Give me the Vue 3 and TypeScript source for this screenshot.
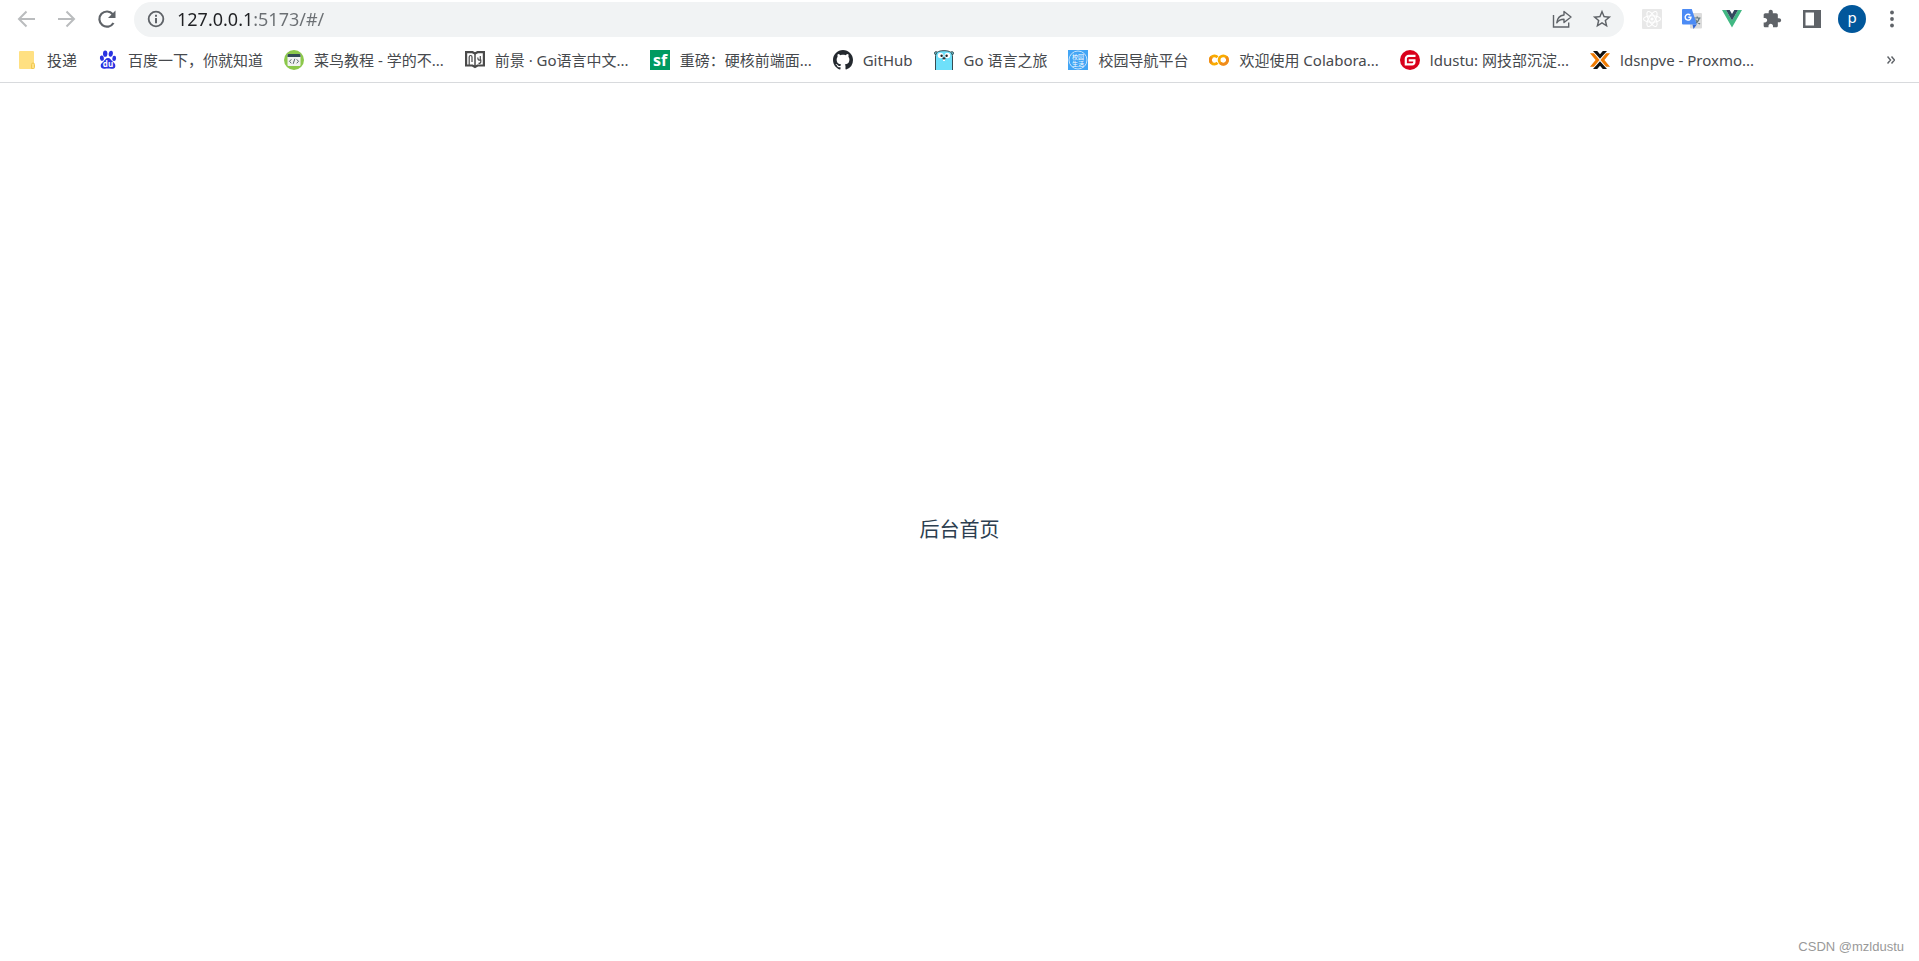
<script setup lang="ts">
import { ref } from 'vue'

interface Bookmark {
  icon: string
  label: string
}

const address = ref('127.0.0.1:5173/#/')

const bookmarks: Bookmark[] = [
  { icon: 'folder', label: '投递' },
  { icon: 'baidu', label: '百度一下，你就知道' },
  { icon: 'runoob', label: '菜鸟教程 - 学的不...' },
  { icon: 'book', label: '前景 · Go语言中文...' },
  { icon: 'sf', label: '重磅：硬核前端面...' },
  { icon: 'github', label: 'GitHub' },
  { icon: 'gopher', label: 'Go 语言之旅' },
  { icon: 'campus', label: '校园导航平台' },
  { icon: 'colab', label: '欢迎使用 Colabora...' },
  { icon: 'gitee', label: 'ldustu: 网技部沉淀...' },
  { icon: 'proxmox', label: 'ldsnpve - Proxmo...' },
]
</script>

<template>
  <div class="browser">
    <header class="chrome">
      <div class="toolbar">
        <nav class="group" aria-label="History">
          <button class="tool faded" aria-label="Back" disabled>
            <svg width="24" height="24" viewBox="0 0 24 24"><path fill="none" stroke="currentColor" stroke-width="2" d="M20 12H4.500M11.500 4.500 4 12l7.500 7.500" /></svg>
          </button>
          <button class="tool faded" aria-label="Forward" disabled>
            <svg width="24" height="24" viewBox="0 0 24 24"><path fill="none" stroke="currentColor" stroke-width="2" d="M3 12h16M11.500 4.500 19 12l-7.500 7.500" /></svg>
          </button>
          <button class="tool" aria-label="Reload">
            <svg width="24" height="24" viewBox="0 0 24 24"><path fill="none" stroke="currentColor" stroke-width="2.200" d="M18.500 16A7.600 7.600 0 1 1 17.800 7.200" /><path fill="currentColor" d="M20.500 3.500v7.500H13z" /></svg>
          </button>
        </nav>

        <form class="omnibox" @submit.prevent>
          <svg class="info" width="20" height="20" viewBox="0 0 24 24" aria-hidden="true"><circle cx="12" cy="12" r="8.800" fill="none" stroke="currentColor" stroke-width="2.200" /><path fill="currentColor" d="M10.800 6.800h2.400v2.400h-2.400zM10.800 10.800h2.400v6.400h-2.400z" /></svg>
          <input v-model="address" class="address" type="text" aria-label="Address" spellcheck="false" />
          <button class="tool" type="button" aria-label="Share">
            <svg width="22" height="22" viewBox="0 0 22 22" fill="none" stroke="currentColor" stroke-width="1.400"><path d="M2.500 7v12h15.200v-4.500" /><path stroke-linejoin="round" d="M13 3.500l7 5.500-7 5.500v-3.200c-3.300 0-5.500 1-7.200 3.500.4-4 2.800-7.300 7.200-7.800z" /></svg>
          </button>
          <button class="tool" type="button" aria-label="Bookmark this page">
            <svg width="22" height="22" viewBox="0 0 24 24"><path fill="currentColor" d="M22 9.240l-7.190-.62L12 2 9.190 8.630 2 9.240l5.460 4.730L5.820 21 12 17.270 18.180 21l-1.630-7.030L22 9.240zM12 15.400l-3.760 2.270 1-4.280-3.320-2.880 4.380-.38L12 6.100l1.710 4.040 4.380.38-3.320 2.880 1 4.280L12 15.400z" /></svg>
          </button>
        </form>

        <div class="group">
          <button class="tool" aria-label="React Developer Tools">
            <svg width="20" height="20" viewBox="0 0 20 20"><rect width="20" height="20" rx="1" fill="#e8e8e8" /><g fill="none" stroke="#fff" stroke-width="1.100"><ellipse cx="10" cy="10" rx="8.500" ry="3.300" /><ellipse cx="10" cy="10" rx="8.500" ry="3.300" transform="rotate(60 10 10)" /><ellipse cx="10" cy="10" rx="8.500" ry="3.300" transform="rotate(120 10 10)" /></g><circle cx="10" cy="10" r="1.600" fill="#fff" /></svg>
          </button>
          <button class="tool" aria-label="Translate">
            <svg width="20" height="20" viewBox="0 0 20 20"><rect x="8" y="4" width="12" height="15.500" rx="1" fill="#dcdcdc" /><path d="M12 9h6.500M15.200 7.500V9M17.300 9c-.6 2.700-2.300 4.700-4.600 5.800M13.500 10.500c.8 2 2.500 3.600 4.600 4.500" stroke="#60777f" stroke-width="1.200" fill="none" /><path fill="#3367d6" d="M10.500 15.500h4.300L11.500 20z" /><path fill="#4c8bf5" d="M1 0h8.800l5 15.500H1a1 1 0 0 1-1-1V1a1 1 0 0 1 1-1z" /><path fill="none" stroke="#fff" stroke-width="1.400" d="M8.300 6.300A2.900 2.900 0 1 0 9 8.300H6.300" /></svg>
          </button>
          <button class="tool" aria-label="Vue.js devtools">
            <svg width="20" height="18" viewBox="0 0 20 18"><path fill="#41b883" d="M0 0h4l6 10.400L16 0h4L10 17.500z" /><path fill="#34495e" d="M4 0h3.700L10 4l2.300-4H16l-6 10.400z" /></svg>
          </button>
          <button class="tool" aria-label="Extensions">
            <svg width="20" height="20" viewBox="0 0 24 24"><path fill="currentColor" d="M20.500 11H19V7c0-1.100-.9-2-2-2h-4V3.500C13 2.120 11.880 1 10.500 1S8 2.120 8 3.500V5H4c-1.100 0-1.990.9-1.990 2v3.800H3.500c1.490 0 2.700 1.210 2.700 2.700s-1.210 2.700-2.700 2.700H2V20c0 1.100.9 2 2 2h3.800v-1.500c0-1.490 1.210-2.700 2.700-2.700 1.490 0 2.700 1.210 2.700 2.700V22H17c1.100 0 2-.9 2-2v-4h1.500c1.380 0 2.500-1.120 2.500-2.500S21.880 11 20.500 11z" /></svg>
          </button>
          <button class="tool" aria-label="Side panel">
            <svg width="18" height="18" viewBox="0 0 18 18"><path fill="currentColor" fill-rule="evenodd" d="M0 0h18v18H0zM2.500 2.500v13H11v-13z" /></svg>
          </button>
          <button class="tool" aria-label="Profile"><span class="avatar">p</span></button>
          <button class="tool" aria-label="Menu">
            <svg width="4" height="18" viewBox="0 0 4 18" fill="currentColor"><circle cx="2" cy="2.500" r="1.900" /><circle cx="2" cy="9" r="1.900" /><circle cx="2" cy="15.500" r="1.900" /></svg>
          </button>
        </div>
      </div>

      <nav class="bookmarks" aria-label="Bookmarks">
        <a v-for="item in bookmarks" :key="item.icon" class="bookmark" href="#/">
          <svg width="20" height="20" viewBox="0 0 20 20" aria-hidden="true">
            <template v-if="item.icon === 'folder'">
              <rect x="2" y="1" width="15" height="18" rx="1" fill="#ffe082" />
              <path fill="#ffe082" stroke="#f0c850" d="M14.500 18.500v-4a1.500 1.500 0 0 1 3 0v3a1 1 0 0 1-1 1z" />
            </template>
            <template v-else-if="item.icon === 'baidu'">
              <g fill="#2932e1"><ellipse cx="7.200" cy="3.700" rx="2.200" ry="3.100" /><ellipse cx="12.800" cy="3.800" rx="2.100" ry="3" transform="rotate(8 12.800 3.800)" /><ellipse cx="3.900" cy="8.200" rx="2" ry="2.700" transform="rotate(-12 3.900 8.200)" /><ellipse cx="16.200" cy="8.400" rx="1.900" ry="2.600" transform="rotate(8 16.200 8.400)" /><path d="M10 8c2.300 0 3 2 4.300 3.200 1.600 1.500 3.500 2.600 3 5.200-.4 2.200-2.300 2.600-4.200 2.300-2-.3-4.200-.3-6.200 0-2.200.3-4-.5-4.200-2.700-.2-2.300 1.400-3.100 2.900-4.600C6.900 10.100 7.700 8 10 8z" /></g>
              <text x="10" y="17" class="mark" font-size="8" font-weight="700" text-anchor="middle" fill="#fff">du</text>
            </template>
            <template v-else-if="item.icon === 'runoob'">
              <circle cx="10" cy="10" r="10" fill="#8cc84b" />
              <rect x="3.500" y="4" width="13" height="12" rx="1" fill="#f1f2f2" />
              <path fill="#324a57" d="M3.500 7V5a1 1 0 0 1 1-1h11a1 1 0 0 1 1 1v2z" />
              <path fill="none" stroke="#56636b" d="M7.300 9.300 5.500 11.300l1.800 2M12.700 9.300l1.800 2-1.800 2M10.800 8.800l-1.600 5" />
            </template>
            <template v-else-if="item.icon === 'book'">
              <path fill="none" stroke="#4a4a4a" stroke-width="2.200" d="M1.100 2.200h6.400L10 3.500l2.500-1.300h6.400v13.300h-6.400L10 16.900l-2.500-1.400H1.100z" />
              <path fill="none" stroke="#4a4a4a" stroke-width="1.500" d="M10 3.500v13.400" />
              <path fill="none" stroke="#4a4a4a" stroke-width="1.200" d="M4.200 15V7c0-2 2.800-2 2.800 0v5M12.800 7.500c0 3 1.500 3 2.500 2.300V6M15.800 9.500v2.200c0 1.200-1 1.700-2.300 1.700" />
            </template>
            <template v-else-if="item.icon === 'sf'">
              <rect width="20" height="20" fill="#009a61" />
              <text x="10" y="16" class="mark" font-size="16" font-weight="700" text-anchor="middle" fill="#fff">sf</text>
            </template>
            <path v-else-if="item.icon === 'github'" fill="#24292f" transform="scale(1.250)" fill-rule="evenodd" d="M8 0C3.580 0 0 3.580 0 8c0 3.540 2.290 6.530 5.470 7.590.4.070.55-.17.55-.38 0-.19-.01-.82-.01-1.490-2.010.37-2.530-.49-2.690-.94-.09-.23-.48-.94-.82-1.130-.28-.15-.68-.52-.01-.53.63-.01 1.080.58 1.230.82.72 1.210 1.870.87 2.330.66.070-.52.28-.87.51-1.070-1.780-.2-3.640-.89-3.640-3.950 0-.87.31-1.590.82-2.150-.08-.2-.36-1.020.08-2.120 0 0 .67-.21 2.200.82.64-.18 1.320-.27 2-.27s1.360.09 2 .27c1.530-1.040 2.200-.82 2.200-.82.44 1.100.16 1.920.08 2.120.51.56.82 1.270.82 2.150 0 3.070-1.870 3.750-3.650 3.950.29.25.54.73.54 1.480 0 1.070-.01 1.930-.01 2.200 0 .21.15.46.55.38A8.010 8.010 0 0 0 16 8c0-4.420-3.580-8-8-8z" />
            <template v-else-if="item.icon === 'gopher'">
              <circle cx="2" cy="3.200" r="1.500" fill="#6ad7e5" stroke="#394b50" /><circle cx="18" cy="3.200" r="1.500" fill="#6ad7e5" stroke="#394b50" />
              <path fill="#6ee0fa" stroke="#394b50" d="M1.500 20V7c0-4.500 2.300-6.300 8.500-6.300S18.500 2.500 18.500 7v13" />
              <circle cx="6.600" cy="5.500" r="2.800" fill="#fff" /><circle cx="13.400" cy="5.500" r="2.800" fill="#fff" />
              <circle cx="7.600" cy="5.700" r="1.200" fill="#222" /><circle cx="12.600" cy="5.700" r="1.200" fill="#222" />
              <path fill="#fff" d="M9 9h2v2H9z" /><ellipse cx="10" cy="8.400" rx="1.600" ry="1.100" fill="#333" />
            </template>
            <template v-else-if="item.icon === 'campus'">
              <rect width="20" height="20" fill="#42a5f5" />
              <circle cx="10" cy="10" r="9" fill="none" stroke="#c5e3fc" stroke-width="1" />
              <g class="mark" font-size="6" text-anchor="middle" fill="#fff"><text x="10" y="9">校园</text><text x="10" y="16">生活</text></g>
            </template>
            <template v-else-if="item.icon === 'colab'">
              <circle cx="14.300" cy="10" r="4.200" fill="none" stroke="#f9ab00" stroke-width="2.800" />
              <path fill="none" stroke="#f08a1c" stroke-width="2.800" d="M11.300 13A4.200 4.200 0 0 0 17.300 7" />
              <path fill="none" stroke="#f9ab00" stroke-width="2.800" d="M8.500 7.200A4.200 4.200 0 1 0 8.500 12.800" />
              <path fill="none" stroke="#f08a1c" stroke-width="2.800" d="M2.600 7.200A4.200 4.200 0 0 0 2.600 12.800" />
            </template>
            <template v-else-if="item.icon === 'gitee'">
              <circle cx="10" cy="10" r="10" fill="#d9001b" />
              <path fill="none" stroke="#fff" stroke-width="2.200" d="M15.500 5.800H8.800a3 3 0 0 0-3 3v5.500h6.300a2.300 2.300 0 0 0 2.300-2.300V10.300H8.700" />
            </template>
            <template v-else>
              <path fill="#111" d="M3 1h4.200L10 4.200 12.800 1H17l-7 7.800zM3 19h4.200l2.800-3.200 2.800 3.200H17l-7-7.800z" />
              <path fill="#f07a00" d="M0 3.200h3.900L9.600 10l-5.700 6.800H0L5.600 10zM20 3.200h-3.900L10.400 10l5.700 6.800H20L14.400 10z" />
            </template>
          </svg>
          <span>{{ item.label }}</span>
        </a>
        <button class="tool overflow" aria-label="More bookmarks">
          <svg width="8" height="8" viewBox="0 0 8 8"><path fill="none" stroke="currentColor" stroke-width="1.500" d="M.5.5 3.500 4l-3 3.500M4.500.5l3 3.500-3 3.500" /></svg>
        </button>
      </nav>
    </header>

    <main class="page">
      <p class="title">后台首页</p>
      <small class="credit">CSDN @mzldustu</small>
    </main>
  </div>
</template>

<style>
body {
  margin: 0;
  background: #fff;
}
</style>

<style scoped>
.browser {
  display: flex;
  flex-direction: column;
  min-height: 100vh;
  font-family: "Noto Sans", "Noto Sans CJK SC", sans-serif;
  color: #3c4043;
}

.chrome {
  border-bottom: 1px solid #d8dadd;
}

.toolbar {
  display: flex;
  align-items: center;
  height: 38px;
  padding: 0 7px;
}

.group {
  display: flex;
  align-items: center;
}

.tool {
  display: flex;
  align-items: center;
  justify-content: center;
  width: 40px;
  height: 34px;
  padding: 0;
  border: 0;
  background: none;
  color: #5f6368;
  font: inherit;
}

.faded {
  color: #babcbe;
}

.omnibox {
  display: flex;
  flex: 1;
  align-items: center;
  height: 35px;
  margin: 0 8px 0 7px;
  padding: 0 2px 0 12px;
  border-radius: 18px;
  background: #f1f3f4;
}

.info {
  flex: none;
  color: #5f6368;
}

.address {
  flex: 1;
  min-width: 0;
  padding: 0 0 0 11px;
  border: 0;
  outline: 0;
  background: linear-gradient(to right, #202124 87px, #6b6f73 87px);
  background-clip: text;
  color: transparent;
  font: 18px/28px "Noto Sans", sans-serif;
}

.avatar {
  width: 28px;
  height: 28px;
  border-radius: 50%;
  background: #01579b;
  color: #fff;
  font-size: 15px;
  line-height: 24px;
}

.bookmarks {
  display: flex;
  align-items: center;
  gap: 21px;
  height: 44px;
  padding: 0 8px 0 17px;
}

.bookmark {
  display: flex;
  align-items: center;
  gap: 10px;
  color: #46494d;
  font-size: 15px;
  line-height: 20px;
  white-space: nowrap;
  text-decoration: none;
}

.bookmark svg {
  flex: none;
}

.mark {
  font-family: "Open Sans", "Noto Sans CJK SC", sans-serif;
}

.overflow {
  margin-left: auto;
}

.page {
  position: relative;
  display: flex;
  flex: 1;
  align-items: center;
  justify-content: center;
}

.title {
  margin: 0;
  padding-top: 16px;
  color: #2c3e50;
  font-size: 20px;
  line-height: 28px;
}

.credit {
  position: absolute;
  right: 15px;
  bottom: 6px;
  color: #999;
  font: 13px/16px "Liberation Sans", Arial, sans-serif;
}
</style>
